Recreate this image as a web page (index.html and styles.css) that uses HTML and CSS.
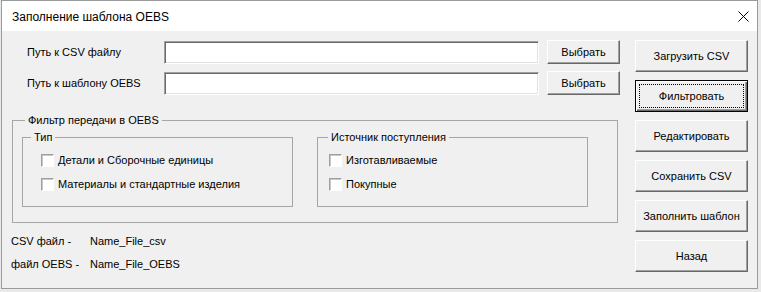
FILE: index.html
```html
<!DOCTYPE html>
<html lang="ru">

<head>
    <meta charset="UTF-8">
    <meta name="viewport" content="width=device-width, initial-scale=1.0">
    <title>Заполнение шаблона OEBS</title>
    <link rel="stylesheet" href="styles.css">
</head>

<body>
    <div class="window">
        <div class="titlebar">
            <span class="caption">Заполнение шаблона OEBS</span>
            <span class="close">
                <svg width="11" height="11" viewBox="0 0 11 11">
                    <path d="M0.5 0.5 L10.5 10.5 M10.5 0.5 L0.5 10.5" stroke="#000" stroke-width="1" fill="none" />
                </svg>
            </span>
        </div>
        <div class="client">
            <div class="main">
                <div class="path-row">
                    <label class="path-label">Путь к CSV файлу</label>
                    <input type="text" class="path-input" id="csv_path" />
                    <button class="btn pick">Выбрать</button>
                </div>
                <div class="path-row">
                    <label class="path-label">Путь к шаблону OEBS</label>
                    <input type="text" class="path-input" id="oebs_path" />
                    <button class="btn pick">Выбрать</button>
                </div>
                <fieldset class="filter">
                    <legend>Фильтр передачи в OEBS</legend>
                    <div class="groups">
                        <fieldset class="group type">
                            <legend>Тип</legend>
                            <label class="check"><i class="box"></i>Детали и Сборочные единицы</label>
                            <label class="check"><i class="box"></i>Материалы и стандартные изделия</label>
                        </fieldset>
                        <fieldset class="group source">
                            <legend>Источник поступления</legend>
                            <label class="check"><i class="box"></i>Изготавливаемые</label>
                            <label class="check"><i class="box"></i>Покупные</label>
                        </fieldset>
                    </div>
                </fieldset>
                <div class="info">
                    <p><span class="info-key">CSV файл -</span><span>Name_File_csv</span></p>
                    <p><span class="info-key">файл OEBS -</span><span>Name_File_OEBS</span></p>
                </div>
            </div>
            <div class="actions">
                <button class="btn">Загрузить CSV</button>
                <button class="btn focus"><span>Фильтровать</span></button>
                <button class="btn">Редактировать</button>
                <button class="btn">Сохранить CSV</button>
                <button class="btn">Заполнить шаблон</button>
                <button class="btn">Назад</button>
            </div>
        </div>
    </div>
</body>

</html>
```

FILE: styles.css
```css
* {
    margin: 0;
    padding: 0;
    box-sizing: border-box;
}

body {
    background: #e9e9e9;
    font-family: "Liberation Sans", Arial, sans-serif;
    font-size: 11px;
    color: #000;
}

.window {
    width: 757px;
    height: 289px;
    margin-left: 1px;
    border: 1px solid #9a9a9a;
    background: #f0f0f0;
}

.titlebar {
    height: 30px;
    background: #fff;
    display: flex;
    align-items: center;
    justify-content: space-between;
    padding: 0 8px 0 10px;
}

.caption {
    font-size: 12px;
    padding-top: 2px;
}

.close {
    display: flex;
    padding-top: 1px;
}

.client {
    display: flex;
    padding: 9px 9px 0 9px;
}

.main {
    width: 610px;
}

.path-row {
    display: flex;
    align-items: center;
    height: 24px;
    margin-bottom: 7px;
    padding-left: 16px;
}

.path-label {
    width: 137px;
}

.path-input {
    width: 375px;
    height: 23px;
    margin-right: 8px;
    border: 1px solid;
    border-color: #a0a0a0 #fff #fff #a0a0a0;
    box-shadow: inset 1px 1px 0 #696969, inset -1px -1px 0 #e3e3e3;
    background: #fff;
    outline: none;
}

.btn {
    font-family: inherit;
    font-size: 11px;
    color: #000;
    background: #f0f0f0;
    border: 1px solid;
    border-color: #fff #696969 #696969 #fff;
    box-shadow: inset -1px -1px 0 #a0a0a0;
    cursor: pointer;
}

.pick {
    width: 73px;
    height: 24px;
}

.filter {
    width: 606px;
    height: 110px;
    margin: 18px 0 0 1px;
    border: 1px solid #a6a6a6;
    padding: 3px 0 0 0;
}

.filter legend,
.group legend {
    margin-left: 12px;
    padding: 0 3px;
    line-height: 14px;
}

.groups {
    display: flex;
    gap: 24px;
    padding-left: 9px;
}

.group {
    width: 271px;
    height: 77px;
    border: 1px solid #a6a6a6;
    padding: 4px 0 0 0;
}

.type legend {
    margin-left: 8px;
}

.source legend {
    margin-left: 10px;
}

.check {
    display: flex;
    align-items: center;
    height: 24px;
}

.type .check {
    padding-left: 18px;
}

.source .check {
    padding-left: 11px;
}

.box {
    width: 13px;
    height: 13px;
    margin-right: 4px;
    background: #fff;
    border: 1px solid;
    border-color: #a0a0a0 #fff #fff #a0a0a0;
    box-shadow: inset 1px 1px 0 #c8c8c8;
}

.info {
    margin-top: 6px;
}

.info p {
    display: flex;
    align-items: center;
    height: 23px;
}

.info-key {
    width: 79px;
}

.actions {
    display: flex;
    flex-direction: column;
    gap: 8px;
    margin-left: 15px;
}

.actions .btn {
    width: 113px;
    height: 32px;
}

.btn.focus {
    border: 1px solid #000;
    box-shadow: inset 1px 1px 0 #fff, inset -1px -1px 0 #696969, inset -2px -2px 0 #a0a0a0;
    padding: 3px;
}

.btn.focus span {
    display: flex;
    align-items: center;
    justify-content: center;
    height: 100%;
    border: 1px dotted #000;
}
```
